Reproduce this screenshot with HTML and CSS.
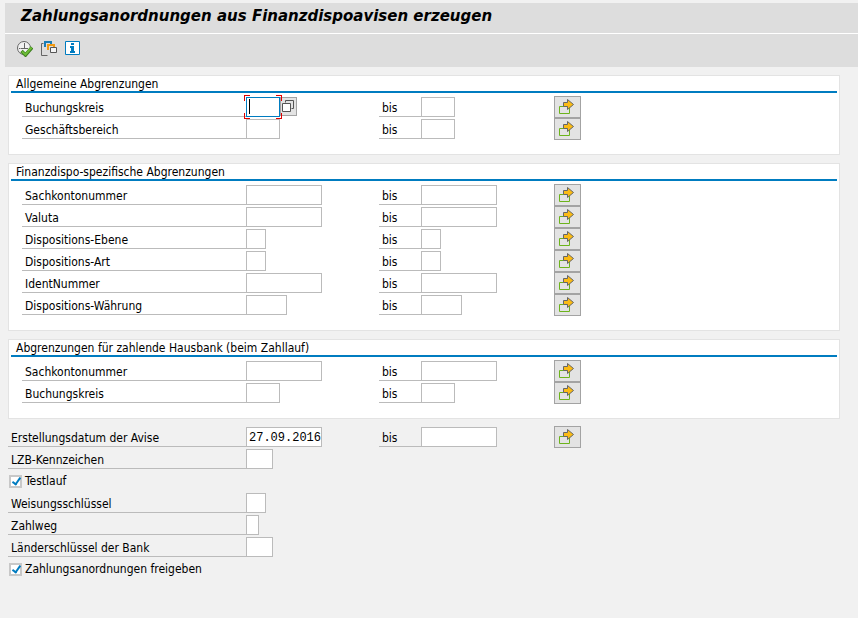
FILE: index.html
```html
<!DOCTYPE html>
<html lang="de">
<head>
<meta charset="utf-8">
<title>Zahlungsanordnungen aus Finanzdispoavisen erzeugen</title>
<link rel="stylesheet" href="styles.css">
</head>
<body>
<svg class="defs" aria-hidden="true">
  <symbol id="multi" viewBox="0 0 25 20">
    <path d="M4.500 9.500h10v7h-10z" fill="none" stroke="#6cb31c"/>
    <path d="M8.500 5.500h4v-3l6 5-6 5v-3h-4z" fill="#fbbb14" stroke="#666"/>
  </symbol>
</svg>
<header class="titlebar"><h1>Zahlungsanordnungen aus Finanzdispoavisen erzeugen</h1></header>
<nav class="toolbar" aria-label="Funktionen">
  <button type="button" aria-label="Ausführen">
    <svg width="16" height="16" viewBox="0 0 16 16">
      <circle cx="7" cy="7" r="6.500" fill="#f2f2f2" stroke="#666"/>
      <path d="M7.500 2v6M7 7.500H3.500M7 7.500h4M2 7.500h1M7.500 12v1" fill="none" stroke="#666"/>
      <path d="M4.500 10l4 4 6.500-7.500" fill="none" stroke="#3c7d1e" stroke-width="3.500"/>
      <path d="M5 10.500l3.500 3 6-7" fill="none" stroke="#6cbc35" stroke-width="2"/>
    </svg>
  </button>
  <button type="button" aria-label="Variante holen">
    <svg width="16" height="16" viewBox="0 0 16 16">
      <path d="M2.500 2.500h-2v12h6" fill="none" stroke="#666"/>
      <path d="M4 6V1h6v2" fill="none" stroke="#1a7db5" stroke-width="2"/>
      <path d="M7 9V4h6v2" fill="none" stroke="#f09a13" stroke-width="2"/>
      <path d="M9.500 6.500h6v5h-6z" fill="#f4f4f4" stroke="#555"/>
    </svg>
  </button>
  <button type="button" aria-label="Information">
    <svg width="16" height="16" viewBox="0 0 16 16">
      <path d="M.5 .5h14v13H.5z" fill="#fff" stroke="#007cc0"/>
      <path d="M6 2h3v2H6zM5 5h4v5h1v2H5v-2h1V7H5z" fill="#007cc0"/>
    </svg>
  </button>
</nav>
<main>
  <section class="group">
    <h2>Allgemeine Abgrenzungen</h2>
    <div class="row">
      <label for="a1">Buchungskreis</label>
      <div class="cell"><div class="focus"><input id="a1" class="w34"><i class="caret"></i><button type="button" class="help" aria-label="Eingabehilfe"><svg width="15" height="17" viewBox="0 0 15 17"><path d="M4.500 4.500v-2h8v8h-2M1.500 5.500h8v8h-8z" fill="none" stroke="#555"/><path d="M2 6h7v7H2z" fill="#fff"/></svg></button></div></div>
      <label for="a2">bis</label>
      <div class="cell"><input id="a2" class="w34"></div>
      <button type="button" class="more" aria-label="Mehrfachselektion"><svg width="25" height="20"><use href="#multi"/></svg></button>
    </div>
    <div class="row">
      <label for="b1">Geschäftsbereich</label>
      <div class="cell"><input id="b1" class="w34"></div>
      <label for="b2">bis</label>
      <div class="cell"><input id="b2" class="w34"></div>
      <button type="button" class="more" aria-label="Mehrfachselektion"><svg width="25" height="20"><use href="#multi"/></svg></button>
    </div>
  </section>
  <section class="group">
    <h2>Finanzdispo-spezifische Abgrenzungen</h2>
    <div class="row">
      <label for="c1">Sachkontonummer</label>
      <div class="cell"><input id="c1" class="w76"></div>
      <label for="c2">bis</label>
      <div class="cell"><input id="c2" class="w76"></div>
      <button type="button" class="more" aria-label="Mehrfachselektion"><svg width="25" height="20"><use href="#multi"/></svg></button>
    </div>
    <div class="row">
      <label for="d1">Valuta</label>
      <div class="cell"><input id="d1" class="w76"></div>
      <label for="d2">bis</label>
      <div class="cell"><input id="d2" class="w76"></div>
      <button type="button" class="more" aria-label="Mehrfachselektion"><svg width="25" height="20"><use href="#multi"/></svg></button>
    </div>
    <div class="row">
      <label for="e1">Dispositions-Ebene</label>
      <div class="cell"><input id="e1" class="w20"></div>
      <label for="e2">bis</label>
      <div class="cell"><input id="e2" class="w20"></div>
      <button type="button" class="more" aria-label="Mehrfachselektion"><svg width="25" height="20"><use href="#multi"/></svg></button>
    </div>
    <div class="row">
      <label for="f1">Dispositions-Art</label>
      <div class="cell"><input id="f1" class="w20"></div>
      <label for="f2">bis</label>
      <div class="cell"><input id="f2" class="w20"></div>
      <button type="button" class="more" aria-label="Mehrfachselektion"><svg width="25" height="20"><use href="#multi"/></svg></button>
    </div>
    <div class="row">
      <label for="g1">IdentNummer</label>
      <div class="cell"><input id="g1" class="w76"></div>
      <label for="g2">bis</label>
      <div class="cell"><input id="g2" class="w76"></div>
      <button type="button" class="more" aria-label="Mehrfachselektion"><svg width="25" height="20"><use href="#multi"/></svg></button>
    </div>
    <div class="row">
      <label for="h1">Dispositions-Währung</label>
      <div class="cell"><input id="h1" class="w41"></div>
      <label for="h2">bis</label>
      <div class="cell"><input id="h2" class="w41"></div>
      <button type="button" class="more" aria-label="Mehrfachselektion"><svg width="25" height="20"><use href="#multi"/></svg></button>
    </div>
  </section>
  <section class="group">
    <h2>Abgrenzungen für zahlende Hausbank (beim Zahllauf)</h2>
    <div class="row">
      <label for="i1">Sachkontonummer</label>
      <div class="cell"><input id="i1" class="w76"></div>
      <label for="i2">bis</label>
      <div class="cell"><input id="i2" class="w76"></div>
      <button type="button" class="more" aria-label="Mehrfachselektion"><svg width="25" height="20"><use href="#multi"/></svg></button>
    </div>
    <div class="row">
      <label for="j1">Buchungskreis</label>
      <div class="cell"><input id="j1" class="w34"></div>
      <label for="j2">bis</label>
      <div class="cell"><input id="j2" class="w34"></div>
      <button type="button" class="more" aria-label="Mehrfachselektion"><svg width="25" height="20"><use href="#multi"/></svg></button>
    </div>
  </section>
  <section class="free">
    <div class="row">
      <label for="k1">Erstellungsdatum der Avise</label>
      <div class="cell"><input id="k1" class="w76" value="27.09.2016"></div>
      <label for="k2">bis</label>
      <div class="cell"><input id="k2" class="w76"></div>
      <button type="button" class="more" aria-label="Mehrfachselektion"><svg width="25" height="20"><use href="#multi"/></svg></button>
    </div>
    <div class="row"><label for="l1">LZB-Kennzeichen</label><div class="cell"><input id="l1" class="w27"></div></div>
    <div class="check"><input type="checkbox" id="m1" checked><label for="m1">Testlauf</label></div>
    <div class="row"><label for="n1">Weisungsschlüssel</label><div class="cell"><input id="n1" class="w20"></div></div>
    <div class="row"><label for="o1">Zahlweg</label><div class="cell"><input id="o1" class="w13"></div></div>
    <div class="row"><label for="p1">Länderschlüssel der Bank</label><div class="cell"><input id="p1" class="w27"></div></div>
    <div class="check"><input type="checkbox" id="q1" checked><label for="q1">Zahlungsanordnungen freigeben</label></div>
  </section>
</main>
</body>
</html>
```
FILE: styles.css
```css
* { box-sizing: border-box; }
body {
  margin: 0;
  padding: 3px 0 0 5px;
  background: #f1f1f1;
  color: #000;
  font: 12px/15px "DejaVu Sans Condensed", "DejaVu Sans", sans-serif;
}
button, input { margin: 0; padding: 0; border: 0; border-radius: 0; font: inherit; }
svg { display: block; }
.defs { position: absolute; width: 0; height: 0; }
.titlebar {
  height: 31px;
  padding-left: 16px;
  background: #ddd;
  border-bottom: 1px solid #fff;
}
.titlebar h1 {
  margin: 0;
  font: italic bold 15px/27px "DejaVu Sans", sans-serif;
  white-space: nowrap;
}
.toolbar {
  display: flex;
  gap: 8px;
  height: 33px;
  padding: 7px 12px;
  background: #ddd;
}
.toolbar button { width: 16px; height: 16px; background: none; }
main { display: grid; gap: 8px; padding: 8px 18px 8px 3px; }
.group {
  padding: 0 2px 14px;
  background: #fff;
  border: 1px solid #e3e3e3;
}
.group h2 {
  margin: 0 0 3px;
  padding: 1px 0 0 5px;
  border-bottom: 2px solid #007cc0;
  font-size: 12px;
  line-height: 14px;
  font-weight: normal;
}
.row {
  display: grid;
  grid-template-columns: 238px 133px 42px 133px 27px;
  align-items: center;
  height: 22px;
}
.group .row { grid-template-columns: 224px 133px 42px 133px 27px; margin-left: 11px; }
.row label {
  height: 20px;
  padding-left: 3px;
  border-bottom: 1px solid #bbb;
  line-height: 23px;
  white-space: nowrap;
}
.cell { display: flex; }
.cell input {
  height: 20px;
  padding: 1px 0 0 2px;
  background: #fff;
  border: 1px solid #bbb;
  font: 12px/17px "Liberation Mono", monospace;
}
.w13 { width: 13px; }
.w20 { width: 20px; }
.w27 { width: 27px; }
.w34 { width: 34px; }
.w41 { width: 41px; }
.w76 { width: 76px; }
.more { width: 27px; height: 22px; background: #e3e3e3; border: 1px solid #a3a3a3; }
.focus { position: relative; display: flex; }
.focus input { border-color: #007cc0; outline: 0; }
.focus::after {
  content: "";
  position: absolute;
  inset: -2px;
  pointer-events: none;
  --c: #e00000;
  background:
    linear-gradient(var(--c), var(--c)) 0 0 / 6px 1px, linear-gradient(var(--c), var(--c)) 0 0 / 1px 6px,
    linear-gradient(var(--c), var(--c)) 100% 0 / 6px 1px, linear-gradient(var(--c), var(--c)) 100% 0 / 1px 6px,
    linear-gradient(var(--c), var(--c)) 0 100% / 6px 1px, linear-gradient(var(--c), var(--c)) 0 100% / 1px 6px,
    linear-gradient(var(--c), var(--c)) 100% 100% / 6px 1px, linear-gradient(var(--c), var(--c)) 100% 100% / 1px 6px;
  background-repeat: no-repeat;
}
.caret { position: absolute; left: 3px; top: 2px; width: 1px; height: 15px; background: #000; }
.help {
  position: absolute;
  left: 100%;
  top: 0;
  width: 17px;
  height: 19px;
  background: #e3e3e3;
  border: 1px solid #a3a3a3;
}
.check { display: flex; align-items: center; gap: 3px; height: 22px; padding-left: 1px; }
.check label { line-height: 17px; padding-top: 1px; }
.check input {
  appearance: none;
  width: 13px;
  height: 13px;
  border: 2px solid #c8c8c8;
  background: #fff;
  position: relative;
}
.check input:checked::after {
  content: "";
  position: absolute;
  left: 3px;
  top: -1px;
  width: 5px;
  height: 9px;
  border: solid #007cc0;
  border-width: 0 2px 2px 0;
  box-sizing: border-box;
  transform: rotate(35deg);
}
.free { margin-top: -1px; }
```
